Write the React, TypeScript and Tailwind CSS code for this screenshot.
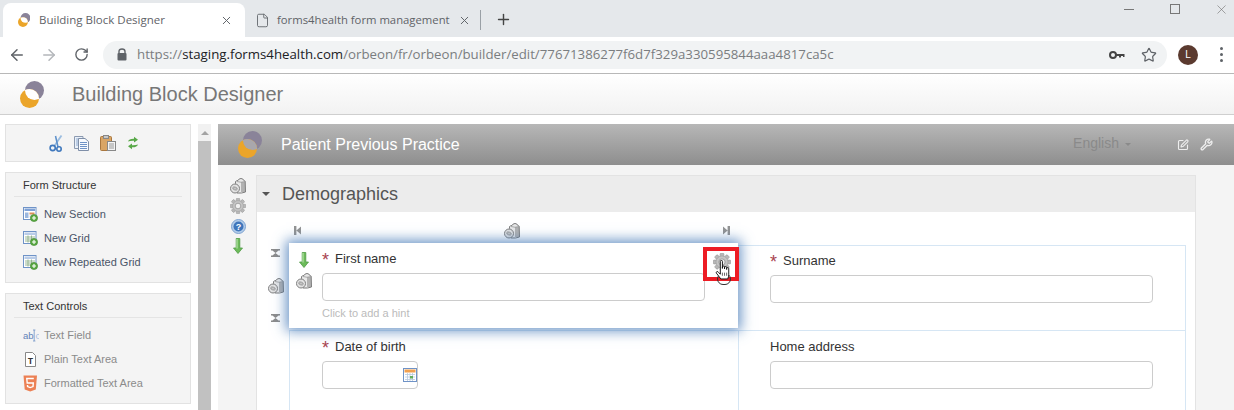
import React from "react";
import { ArrowLeft, ArrowRight, RotateCw, Star, Plus, X, File, SquarePen, Wrench } from "lucide-react";

const arial = "font-['Liberation_Sans',Arial,sans-serif]";
const ui = "font-['Open_Sans','Noto_Sans',sans-serif]";

function Logo({ mid = "#ffffff", size = 27 }: { mid?: string; size?: number }) {
  return (
    <svg width={(size * 24) / 27} height={size} viewBox="0 0 24 27" className="shrink-0">
      <defs>
        <clipPath id={"lg" + mid.slice(1) + size}>
          <circle cx="14.5" cy="9.5" r="9.5" />
        </clipPath>
      </defs>
      <circle cx="14.5" cy="9.5" r="9.5" fill="#8a8399" />
      <circle cx="9.5" cy="17.5" r="9.5" fill="#eba52a" />
      <circle cx="9.5" cy="17.5" r="9.5" fill={mid} clipPath={"url(#lg" + mid.slice(1) + size + ")"} />
    </svg>
  );
}

function Bin({ className = "" }: { className?: string }) {
  return (
    <svg width="16" height="16" viewBox="0 0 16 16" className={className}>
      <path d="M5.5 5.5 V3.5 Q6.5 2.6 8 2.5 Q8.8 0.5 11 0.5 Q13.2 0.5 13.8 2.5 L15.2 3.2 L15.5 14 Q12 15.5 7 15 Z" fill="#e8e8e8" stroke="#7d7d7d" strokeWidth="1" />
      <path d="M12 4 V14 M14 4 V14" stroke="#7d7d7d" strokeWidth="1" />
      <path d="M7 3.5 Q11 5 15 3.5" fill="none" stroke="#999" strokeWidth="0.8" />
      <ellipse cx="5" cy="10.5" rx="4.5" ry="4.5" fill="#e2e2e2" stroke="#808080" strokeWidth="1" />
      <ellipse cx="5" cy="10.5" rx="2.4" ry="1.4" fill="#c4c4c4" stroke="#8a8a8a" strokeWidth="0.7" transform="rotate(20 5 10.5)" />
    </svg>
  );
}

function Gear({ size = 16, className = "" }: { size?: number; className?: string }) {
  const teeth = [0, 45, 90, 135, 180, 225, 270, 315];
  return (
    <svg width={size} height={size} viewBox="0 0 16 16" className={className}>
      {teeth.map((a) => (
        <rect key={a} x="6.3" y="0.2" width="3.4" height="3.6" rx="0.8" fill="#b8b8b8" stroke="#949494" strokeWidth="0.5" transform={`rotate(${a} 8 8)`} />
      ))}
      <circle cx="8" cy="8" r="5.4" fill="#c4c4c4" stroke="#a0a0a0" strokeWidth="0.6" />
      <circle cx="8" cy="8" r="2.8" fill="#f0f0f0" stroke="#969696" strokeWidth="0.8" />
    </svg>
  );
}

function Help() {
  return (
    <svg width="15" height="15" viewBox="0 0 15 15">
      <circle cx="7.5" cy="7.5" r="7" fill="#b4cdea" stroke="#7fa3d0" strokeWidth="1" />
      <circle cx="7.5" cy="7.5" r="5" fill="#3f76bb" />
      <text x="7.5" y="10.6" textAnchor="middle" fontSize="9" fontWeight="700" fill="#fff" fontFamily="Liberation Sans">?</text>
    </svg>
  );
}

function GreenArrow() {
  return (
    <svg width="10" height="16" viewBox="0 0 10 16">
      <path d="M3.2 0.5 H6.8 V10 H9.5 L5 15.5 L0.5 10 H3.2Z" fill="#6cbb5a" stroke="#4f9a45" strokeWidth="0.8" />
      <path d="M4 1 V10.5" stroke="#c4ecb6" strokeWidth="1" />
    </svg>
  );
}

function RowTool() {
  return (
    <svg width="9" height="8" viewBox="0 0 9 8">
      <path d="M0 0 H9 V1.4 H7.6 L4.5 4 L1.4 1.4 H0Z M0 8 H9 V6.6 H7.6 L4.5 4 L1.4 6.6 H0Z" fill="#8c8c8c" />
    </svg>
  );
}

function ColTool({ flip = false }: { flip?: boolean }) {
  return (
    <svg width="7" height="9" viewBox="0 0 7 9" className={flip ? "-scale-x-100" : ""}>
      <path d="M0 0 H2.4 V9 H0Z M2.4 4.5 L7 0.5 V8.5Z" fill="#939393" />
    </svg>
  );
}

function Plusb({ x = 10, y = 10 }: { x?: number; y?: number }) {
  return (
    <g>
      <circle cx={x} cy={y} r="3.6" fill="#5aa842" stroke="#3f8a2e" strokeWidth="0.6" />
      <path d={`M${x - 2} ${y} H${x + 2} M${x} ${y - 2} V${y + 2}`} stroke="#fff" strokeWidth="1.1" />
    </g>
  );
}

function SectionIcon({ kind }: { kind: "section" | "grid" }) {
  return (
    <svg width="15" height="15" viewBox="0 0 15 15" className="shrink-0">
      <rect x="0.5" y="0.5" width="12.5" height="12" fill="#fff" stroke="#6f93c7" />
      <rect x="1.5" y="1.5" width="10.5" height="2.5" fill={kind === "section" ? "#7fa2d6" : "#b9cce8"} />
      {kind === "section" ? (
        <>
          <rect x="2" y="5.5" width="3.5" height="5.5" fill="#9bb7de" />
          <rect x="6.5" y="5.5" width="5" height="2" fill="#d98e58" />
          <rect x="6.5" y="8.5" width="5" height="2" fill="#c9d8ee" />
        </>
      ) : (
        <path d="M2 6 H12 M2 8 H12 M2 10 H12 M5 4.5 V11.5 M8.5 4.5 V11.5" stroke="#8fb08a" strokeWidth="0.9" />
      )}
      <Plusb x={11} y={11} />
    </svg>
  );
}

function TextFieldIcon() {
  return (
    <svg width="16" height="15" viewBox="0 0 16 15" className="shrink-0">
      <text x="0" y="11" fontSize="9.5" fontFamily="Liberation Sans" fill="#5f82b8">ab</text>
      <path d="M10 2 H12.4 M11.2 2 V13 M10 13 H12.4" stroke="#6f93c7" strokeWidth="0.8" fill="none" />
      <text x="12.4" y="11" fontSize="9.5" fontFamily="Liberation Sans" fill="#a8c2e4">c</text>
    </svg>
  );
}

function PlainIcon() {
  return (
    <svg width="13" height="15" viewBox="0 0 13 15" className="shrink-0">
      <path d="M1.5 0.5 H8.5 L11.5 3.5 V14.5 H1.5Z" fill="#fff" stroke="#888" />
      <text x="6.5" y="11.5" textAnchor="middle" fontSize="9" fontWeight="700" fontFamily="Liberation Mono" fill="#333">T</text>
    </svg>
  );
}

function Html5Icon() {
  return (
    <svg width="15" height="17" viewBox="0 0 15 17" className="shrink-0">
      <path d="M0.5 0.5 H14 L12.8 14.5 L7.2 16.5 L1.7 14.5Z" fill="#ec8054" />
      <path d="M10.8 3.5 H3.8 L4.2 8 H10.3 L10 11.6 L7.2 12.6 L4.6 11.6 L4.5 10" fill="none" stroke="#fff" strokeWidth="1.4" />
    </svg>
  );
}

function Scissors() {
  return (
    <svg width="14" height="17" viewBox="0 0 14 17">
      <path d="M12.5 0.5 L5 11.5" stroke="#9cbde0" strokeWidth="1.8" />
      <path d="M6.5 1 L9 12" stroke="#5b8fca" strokeWidth="1.5" />
      <circle cx="3.7" cy="13" r="2.6" fill="none" stroke="#3f78bd" strokeWidth="1.6" />
      <circle cx="10" cy="14" r="2.2" fill="none" stroke="#3f78bd" strokeWidth="1.6" />
    </svg>
  );
}

function CopyIcon() {
  return (
    <svg width="15" height="15" viewBox="0 0 15 15">
      <path d="M0.5 0.5 H9 V12.5 H0.5Z" fill="#e9f0f9" stroke="#8c9ab0" />
      <path d="M2 3 H7 M2 5 H4 M2 7 H4 M2 9 H4" stroke="#8eaad0" />
      <path d="M4.5 2.5 H11 L14.5 5.5 V14.5 H4.5Z" fill="#f7fafe" stroke="#7f8fa8" />
      <path d="M6 6.5 H13 M6 8.5 H13 M6 10.5 H13 M6 12.5 H13" stroke="#6f93c7" strokeWidth="1" />
    </svg>
  );
}

function PasteIcon() {
  return (
    <svg width="16" height="16" viewBox="0 0 16 16">
      <rect x="0.5" y="1.5" width="11" height="14" rx="1" fill="#d9a565" stroke="#a9773f" />
      <rect x="3.5" y="0.5" width="5" height="3" fill="#c7c7c7" stroke="#888" />
      <rect x="7.5" y="6.5" width="8" height="9" fill="#f4f4f4" stroke="#888" />
      <path d="M9 9 H14 M9 11 H14 M9 13 H14" stroke="#999" />
    </svg>
  );
}

function SwapIcon() {
  return (
    <svg width="12" height="14" viewBox="0 0 12 14">
      <path d="M1 5.5 Q2 2.5 7 2.7 V0.8 L11 3.7 L7 6.5 V4.7 Q3.5 4.5 1 5.5Z" fill="#58a848" />
      <path d="M11 8.5 Q10 11.5 5 11.3 V13.2 L1 10.3 L5 7.5 V9.3 Q8.5 9.5 11 8.5Z" fill="#58a848" />
    </svg>
  );
}

function Hand() {
  return (
    <svg width="18" height="20" viewBox="0 0 16 19">
      <path
        d="M4.5 1.3 Q4.5 0.4 5.5 0.4 Q6.5 0.4 6.5 1.3 V8 V6.5 Q6.5 5.8 7.5 5.8 Q8.5 5.8 8.5 6.5 V8.5 V7 Q8.5 6.3 9.5 6.3 Q10.5 6.3 10.5 7.1 V9 V8 Q10.5 7.2 11.5 7.2 Q12.5 7.2 12.5 8.2 V14 Q12.5 16 11.5 18 H5 L0.8 12.5 Q0.3 11.5 1.2 11 Q2.1 10.5 3 12 L4.5 13.5Z"
        fill="#fff"
        stroke="#111"
        strokeWidth="0.9"
      />
      <path d="M6.5 12 V15 M8.5 12 V15 M10.5 12 V15" stroke="#111" strokeWidth="0.6" />
    </svg>
  );
}

function Tab({ active, title, icon, sep }: { active?: boolean; title: string; icon: React.ReactNode; sep?: boolean }) {
  return (
    <div className={`flex h-[34px] shrink-0 items-center ${active ? "w-[242px] rounded-t-lg bg-white pl-[13px] pr-[12px]" : "w-[236px] pl-[9px] pr-0"}`}>
      <div className="mr-[7px] flex w-[16px] shrink-0 justify-center">{icon}</div>
      <span className={`${ui} flex-1 whitespace-nowrap ${active ? "text-[11.5px]" : "text-[11.3px]"} text-[#5f6368]`}>{title}</span>
      <X size={13} strokeWidth={1.8} className="shrink-0 text-[#5f6368]" />
      {sep && <div className="ml-[9px] h-[20px] w-px shrink-0 bg-[#9aa0a6]" />}
    </div>
  );
}

function PanelItem({ icon, label, muted }: { icon: React.ReactNode; label: string; muted?: boolean }) {
  return (
    <div className="flex h-[24px] items-center gap-[6px] pl-[17px]">
      <div className="flex w-[15px] justify-center">{icon}</div>
      <span className={`${arial} text-[11px] ${muted ? "text-[#8b8b8b]" : "text-[#4a5568]"}`}>{label}</span>
    </div>
  );
}

function Panel({ title, children, className = "" }: { title: string; children: React.ReactNode; className?: string }) {
  return (
    <div className={`border border-[#e2e2e2] bg-[#f4f4f4] ${className}`}>
      <div className={`${arial} mx-[8px] h-[24px] border-b border-[#e4e4e4] pl-[9px] pt-[4px] text-[11px] leading-[16px] text-[#333]`}>{title}</div>
      <div className="pt-[5px]">{children}</div>
    </div>
  );
}

function Field({ label, required, children }: { label: string; required?: boolean; children: React.ReactNode }) {
  return (
    <div>
      <div className={`${arial} flex h-[16px] items-center text-[13px] leading-[16px] text-[#333]`}>
        {required && <span className="mr-[6px] mt-[2px] w-[7px] text-[18px] leading-[16px] text-[#a8434f]">*</span>}
        {label}
      </div>
      {children}
    </div>
  );
}

const inputClass = "h-[28px] rounded-[4px] border border-[#cccccc] bg-white";

export default function App() {
  return (
    <div className="flex h-[410px] w-[1234px] flex-col overflow-hidden bg-white">
      {/* tab strip */}
      <div className="flex h-[37px] shrink-0 items-end bg-[#e5e8eb] pl-[3px]">
        <Tab active title="Building Block Designer" icon={<Logo size={14} mid="#ffffff" />} />
        <Tab title="forms4health form management" icon={<File size={15} strokeWidth={1.4} className="text-[#5f6368]" />} sep />
        <Plus size={17} strokeWidth={2} className="mb-[9px] ml-[14px] shrink-0 text-[#444]" />
        <div className="flex-1" />
        <div className="flex h-[37px] items-start gap-[36px] pr-[8px] pt-[3px]">
          <div className="flex h-[12px] w-[10px] items-center justify-center">
            <div className="h-px w-[10px] bg-[#777]" />
          </div>
          <div className="flex h-[12px] w-[10px] items-center justify-center">
            <div className="h-[10px] w-[10px] shrink-0 border border-[#777]" />
          </div>
          <div className="flex h-[12px] w-[10px] items-center justify-center">
            <X size={15} strokeWidth={0.9} className="shrink-0 text-[#666]" />
          </div>
        </div>
      </div>

      {/* toolbar */}
      <div className="flex h-[37px] shrink-0 items-center border-b border-[#b8b8b8] bg-white pb-px">
        <div className="flex w-[103px] shrink-0 items-center pl-[8px]">
          <ArrowLeft size={18} strokeWidth={2} className="text-[#5f6368]" />
          <ArrowRight size={18} strokeWidth={2} className="ml-[14px] text-[#b4b7bb]" />
          <RotateCw size={15} strokeWidth={2.2} className="ml-[16px] text-[#5f6368]" />
        </div>
        <div className="flex h-[28px] w-[1064px] shrink-0 items-center rounded-full bg-[#f1f3f4] pl-[14px] pr-[10px]">
          <svg width="10" height="13" viewBox="0 0 10 13" className="mr-[10px] shrink-0">
            <path d="M2 5.5 V3.5 Q2 1 5 1 Q8 1 8 3.5 V5.5" fill="none" stroke="#5f6368" strokeWidth="1.4" />
            <rect x="0.5" y="5" width="9" height="7.5" rx="1" fill="#5f6368" />
          </svg>
          <span className={`${ui} flex-1 whitespace-nowrap text-[13.25px] text-[#7a7d80]`}>
            https://<span className="text-[#202124]">staging.forms4health.com</span>/orbeon/fr/orbeon/builder/edit/77671386277f6d7f329a330595844aaa4817ca5c
          </span>
          <svg width="16" height="8" viewBox="0 0 16 8" className="mr-[16px] shrink-0">
            <circle cx="4" cy="4" r="3" fill="none" stroke="#444" strokeWidth="2" />
            <path d="M7 3 H15.5 V6 H14 V5 H12 V6.5 H10 V5 H7Z" fill="#444" />
          </svg>
          <Star size={16} strokeWidth={1.8} className="shrink-0 text-[#5f6368]" />
        </div>
        <div className={`${arial} ml-[11px] flex h-[20px] w-[20px] shrink-0 items-center justify-center rounded-full bg-[#5b3a2f] text-[10px] text-white`}>L</div>
        <div className="ml-[22px] flex flex-col gap-[3px]">
          <div className="h-[3px] w-[3px] rounded-full bg-[#5f6368]" />
          <div className="h-[3px] w-[3px] rounded-full bg-[#5f6368]" />
          <div className="h-[3px] w-[3px] rounded-full bg-[#5f6368]" />
        </div>
      </div>

      {/* app header */}
      <div className="flex h-[41px] shrink-0 items-center border-b border-[#cfcfcf] bg-gradient-to-b from-white to-[#f2f2f2] pl-[20px]">
        <Logo />
        <span className={`${arial} ml-[28px] text-[20px] text-[#777]`}>Building Block Designer</span>
      </div>

      {/* body */}
      <div className="flex min-h-0 flex-1 pt-[9px]">
        {/* sidebar */}
        <div className="ml-[5px] flex w-[186px] shrink-0 flex-col gap-[10px]">
          <div className="flex h-[38px] items-center justify-center gap-[11px] border border-[#e2e2e2] bg-[#f4f4f4] pr-[8px]">
            <Scissors />
            <CopyIcon />
            <PasteIcon />
            <SwapIcon />
          </div>
          <Panel title="Form Structure" className="h-[111px]">
            <PanelItem icon={<SectionIcon kind="section" />} label="New Section" />
            <PanelItem icon={<SectionIcon kind="grid" />} label="New Grid" />
            <PanelItem icon={<SectionIcon kind="grid" />} label="New Repeated Grid" />
          </Panel>
          <Panel title="Text Controls" className="h-[111px]">
            <PanelItem muted icon={<TextFieldIcon />} label="Text Field" />
            <PanelItem muted icon={<PlainIcon />} label="Plain Text Area" />
            <PanelItem muted icon={<Html5Icon />} label="Formatted Text Area" />
          </Panel>
        </div>

        {/* scrollbar */}
        <div className="ml-[7px] flex w-[13px] shrink-0 flex-col bg-[#f1f1f1]">
          <div className="flex h-[17px] items-center justify-center">
            <div className="h-0 w-0 border-x-[4px] border-b-[4px] border-x-transparent border-b-[#a3a3a3]" />
          </div>
          <div className="flex-1 bg-[#c1c1c1]" />
        </div>

        {/* main */}
        <div className="ml-[7px] flex min-w-0 flex-1 flex-col">
          <div className="flex h-[41px] shrink-0 items-center bg-gradient-to-b from-[#b7b7b7] to-[#8e8e8e] pl-[20px]">
            <Logo mid="#a9a7ac" />
            <span className={`${arial} ml-[19px] text-[16px] text-white`}>Patient Previous Practice</span>
            <div className="flex-1" />
            <span className={`${arial} -mt-[3px] text-[14px] text-[#8a8a8a]`}>English</span>
            <div className="ml-[6px] h-0 w-0 border-x-[3px] border-t-[3px] border-x-transparent border-t-[#8a8a8a]" />
            <SquarePen size={12} strokeWidth={2.2} className="ml-[46px] text-[#eeeeee]" />
            <Wrench size={13} strokeWidth={2.4} className="ml-[11px] mr-[21px] text-[#eeeeee]" />
          </div>

          <div className="flex min-h-0 flex-1 bg-[#f4f4f4] pt-[10px]">
            <div className="flex w-[38px] shrink-0 flex-col items-center gap-[4px] pl-[2px] pt-[3px]">
              <Bin />
              <Gear />
              <div className="mt-px"><Help /></div>
              <GreenArrow />
            </div>

            {/* section */}
            <div className="flex w-[940px] shrink-0 flex-col border-x border-t border-[#e3e3e3] bg-white">
              <div className="flex h-[36px] shrink-0 items-center bg-[#ececec] pl-[5px]">
                <div className="h-0 w-0 border-x-[4px] border-t-[4px] border-x-transparent border-t-[#555]" />
                <span className={`${arial} ml-[12px] text-[18px] text-[#555]`}>Demographics</span>
              </div>

              <div className="flex flex-1">
                {/* row tools gutter */}
                <div className="flex w-[32px] shrink-0 flex-col items-center pl-[5px] pt-[37px]">
                  <RowTool />
                  <Bin className="mt-[21px]" />
                  <div className="mt-[20px]"><RowTool /></div>
                </div>

                <div className="w-[897px] shrink-0">
                  <div className="flex h-[33px] items-center justify-between pl-[5px] pr-[456px] pt-[4px]">
                    <ColTool />
                    <Bin />
                    <ColTool flip />
                  </div>

                  <div className="grid h-[86px] grid-cols-[449px_448px] border-y border-r border-[#d6e6f4]">
                    <div className="relative z-10 -mt-[3px] h-[85px] bg-white pl-[33px] pt-[8px] shadow-[0_0_12px_3px_rgba(60,115,180,0.75)]">
                      <Field label="First name" required>
                        <div className={`${inputClass} mt-[6px] w-[383px]`} />
                      </Field>
                      <div className={`${arial} mt-[4px] text-[11px] text-[#bbbbbb]`}>Click to add a hint</div>

                      <div className="absolute left-[7px] top-[9px] flex flex-col items-center gap-[5px]">
                        <GreenArrow />
                        <Bin />
                      </div>
                      <div className="absolute left-[414px] top-[4px] flex h-[34px] w-[36px] items-start justify-center border-[4px] border-[#ed1c24] pl-px pt-[2px]">
                        <Gear size={18} />
                      </div>
                      <div className="absolute left-[428px] top-[30px] h-[12px] w-[14px] rounded-full border border-[#333]" />
                      <div className="absolute left-[426px] top-[17px]"><Hand /></div>
                    </div>
                    <div className="pl-[32px] pt-[7px]">
                      <Field label="Surname" required>
                        <div className={`${inputClass} mt-[6px] w-[383px]`} />
                      </Field>
                    </div>
                  </div>

                  <div className="grid h-[80px] grid-cols-[448px_448px] border-x border-[#d6e6f4]">
                    <div className="pl-[32px] pt-[8px]">
                      <Field label="Date of birth" required>
                        <div className={`${inputClass} mt-[6px] flex w-[96px] items-center justify-end`}>
                          <svg width="14" height="14" viewBox="0 0 14 14">
                            <rect x="0.5" y="0.5" width="13" height="13" fill="#fff" stroke="#6f93c7" />
                            <rect x="1.5" y="1.5" width="11" height="3" fill="#f0a050" />
                            <path d="M2 6.5 H12 M2 9 H12 M2 11.5 H12 M4.5 5 V13 M7 5 V13 M9.5 5 V13" stroke="#b8c9de" strokeWidth="0.8" />
                            <rect x="7" y="8" width="3" height="2.5" fill="#63ad5e" />
                          </svg>
                        </div>
                      </Field>
                    </div>
                    <div className="border-l border-[#d6e6f4] pl-[31px] pt-[8px]">
                      <Field label="Home address">
                        <div className={`${inputClass} mt-[6px] w-[383px]`} />
                      </Field>
                    </div>
                  </div>
                </div>
              </div>
            </div>
          </div>
        </div>
      </div>
    </div>
  );
}
